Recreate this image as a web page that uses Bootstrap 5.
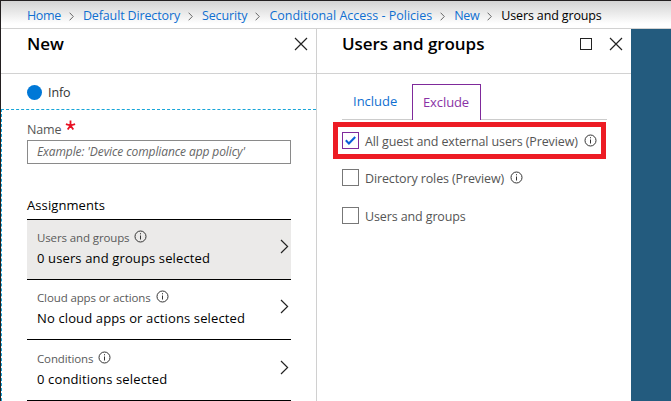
<!DOCTYPE html>
<html lang="en">
<head>
<meta charset="utf-8">
<meta name="viewport" content="width=device-width, initial-scale=1">
<title>Users and groups</title>
<link href="https://cdn.jsdelivr.net/npm/bootstrap@5.3.0/dist/css/bootstrap.min.css" rel="stylesheet">
<style>
body{font-family:"Open Sans","Noto Sans",sans-serif;font-size:13px;line-height:18px;color:#000;background:#fff}
a{text-decoration:none;color:#0f6fd1}
svg{display:block;flex:none;fill:none}
.portal{height:401px;border-top:1px solid #231f20;border-left:1px solid #231f20}
.crumbs{height:27px;font-size:12.5px;padding:2px 0 0 26px;background:linear-gradient(#d3d3d3,#fff 85%)}
.crumbs svg{width:5px;height:9px;margin:1px 9px 0 8px;stroke:#666}
.t1{letter-spacing:-.35px}.t2{letter-spacing:-.14px}.t3{letter-spacing:-.14px}
.blades{background:#235b7e;border-top:1px solid #d2d2d2;height:373px}
.blade-new{width:316px;border-right:1px solid #d0d0d0}
.blade-users{width:314px}
.blade-head{height:45px;border-bottom:1px solid #d2d2d2}
.blade-head h1{font-size:17px;line-height:24px;font-weight:600;margin:3px 0 0;letter-spacing:-.05px}
.blade-new .blade-head{padding-left:26px;padding-right:8px}
.blade-users .blade-head{padding-left:25px;padding-right:8px}
.tools{height:30px;gap:17px}
.info-row{height:35px;padding:1px 0 0 26px;gap:6px;color:#333;font-size:12.5px;letter-spacing:-.1px}
.info-row .txt{padding-top:2px}
.dot{width:15px;height:15px;background:#0078d7;border-radius:50%}
.form-area{height:292px;border-top:1px dashed #18a5d8;border-left:1px dashed #18a5d8;padding:0 25px}
.name-label{height:30px;padding-top:11px;font-size:12.5px;letter-spacing:-.16px;color:#555}
.name-label svg{margin-top:-1px}
.name-field{height:24px;border:1px solid #8a8a8a;border-radius:0;padding:0 9px 2px;font-size:12px;font-style:italic;letter-spacing:-.1px;color:#333;box-shadow:none!important}
.name-field::placeholder{color:#666;opacity:1}
.section-title{font-size:13px;line-height:18px;font-weight:400;margin:32px 0 0;height:23px;letter-spacing:.09px}
.pick{height:60px;border-top:1px solid #000;padding:8px 2px 0 10px}
.pick.on{background:#ebeae9}
.pick.last-pick{height:62px;border-bottom:1px solid #000;padding-top:9px}
.pick-label{font-size:11.5px;line-height:20px;height:20px;color:#5a5a5a;letter-spacing:-.12px;gap:5px}
.pick-label svg{margin-top:-3px}
.pick-value{line-height:21px;letter-spacing:.13px}
.chev{margin-top:11px}
.tabs{margin:10px 24px 0 25px;height:36px}
.tab-line{border-bottom:1px solid #ccc}
.tab-a{width:70px;padding:8px 0 0 11px}
.tab-b{width:69px;border:1px solid #7f2a9b;border-bottom:0;color:#8a32a5;padding:8px 0 0 10px;letter-spacing:-.1px}
.hilite{width:273px;height:37px;border:5px solid #ed1c24;margin:2px 0 0 16px;padding:0 0 0 4px}
.opt{gap:6px;font-size:12.5px;color:#555}
.box{width:17px;height:17px;border:1px solid #777;background:#fff}
.box.on{border-color:#7f2a9b}
.opt-plain{height:37px;margin-left:25px}
.opt-last{margin-top:1px}
.opt .lbl{letter-spacing:-.12px;padding-top:2px}
</style>
</head>
<body>
<svg width="0" height="0" class="position-absolute" aria-hidden="true">
<symbol id="info" viewBox="0 0 13 13"><circle cx="6.5" cy="6.5" r="5.5" stroke="#333"/><path d="M6.5 5.5v4M6.5 3.2v1.1" stroke="#333"/></symbol>
<symbol id="close" viewBox="0 0 14 14"><path d="M1 1l12 12M13 1L1 13" stroke="#222" stroke-width="1.2"/></symbol>
<symbol id="sep" viewBox="0 0 5 9"><path d="M.6.7l3.7 3.8L.6 8.3"/></symbol>
<symbol id="next" viewBox="0 0 9 15"><path d="M1 1l6.6 6.5L1 14" stroke="#222" stroke-width="1.2"/></symbol>
</svg>
<div class="portal overflow-hidden">
<nav class="crumbs d-flex align-items-center text-nowrap" aria-label="breadcrumb">
<a href="#" class="t1">Home</a><svg><use href="#sep"/></svg>
<a href="#" class="t2">Default Directory</a><svg><use href="#sep"/></svg>
<a href="#" class="t2">Security</a><svg><use href="#sep"/></svg>
<a href="#">Conditional Access - Policies</a><svg><use href="#sep"/></svg>
<a href="#" class="t1">New</a><svg><use href="#sep"/></svg>
<span class="t3">Users and groups</span>
</nav>
<div class="blades d-flex">
<section class="blade-new bg-white flex-shrink-0">
<header class="blade-head d-flex justify-content-between align-items-start">
<h1>New</h1>
<div class="tools d-flex align-items-center"><svg width="14" height="14"><use href="#close"/></svg></div>
</header>
<div class="info-row d-flex align-items-center"><span class="dot"></span><span class="txt">Info</span></div>
<div class="form-area">
<label class="name-label d-flex" for="policy">Name<svg class="ms-1" width="11" height="11" viewBox="0 0 11 11"><path d="M5.5 5.5V.6M5.5 5.5L.9 4.1M5.5 5.5l4.6-1.4M5.5 5.5L2.7 9.6M5.5 5.5l2.8 4.1" stroke="#e81123" stroke-width="1.8"/></svg></label>
<input id="policy" class="name-field form-control" type="text" placeholder="Example: 'Device compliance app policy'">
<h2 class="section-title">Assignments</h2>
<div class="pick on d-flex justify-content-between">
<div><div class="pick-label d-flex align-items-center">Users and groups<svg width="13" height="13"><use href="#info"/></svg></div><div class="pick-value">0 users and groups selected</div></div>
<svg class="chev" width="9" height="15"><use href="#next"/></svg>
</div>
<div class="pick d-flex justify-content-between">
<div><div class="pick-label d-flex align-items-center">Cloud apps or actions<svg width="13" height="13"><use href="#info"/></svg></div><div class="pick-value">No cloud apps or actions selected</div></div>
<svg class="chev" width="9" height="15"><use href="#next"/></svg>
</div>
<div class="pick last-pick d-flex justify-content-between">
<div><div class="pick-label d-flex align-items-center">Conditions<svg width="13" height="13"><use href="#info"/></svg></div><div class="pick-value">0 conditions selected</div></div>
<svg class="chev" width="9" height="15"><use href="#next"/></svg>
</div>
</div>
</section>
<section class="blade-users bg-white flex-shrink-0">
<header class="blade-head d-flex justify-content-between align-items-start">
<h1>Users and groups</h1>
<div class="tools d-flex align-items-center">
<svg width="12" height="12"><rect x=".5" y=".5" width="11" height="11" stroke="#222"/></svg>
<svg width="14" height="14"><use href="#close"/></svg>
</div>
</header>
<div class="tabs d-flex">
<a href="#" class="tab-a tab-line">Include</a>
<div class="tab-b">Exclude</div>
<div class="flex-grow-1 tab-line"></div>
</div>
<div class="hilite opt d-flex align-items-center">
<span class="box on d-flex align-items-center justify-content-center"><svg width="11" height="9" viewBox="0 0 11 9"><path d="M.8 4.3l3.1 3.2L10.2 1" stroke="#0b5fd8" stroke-width="2"/></svg></span>
<span class="lbl">All guest and external users (Preview)</span><svg width="13" height="13"><use href="#info"/></svg>
</div>
<div class="opt opt-plain d-flex align-items-center"><span class="box"></span><span class="lbl">Directory roles (Preview)</span><svg width="13" height="13"><use href="#info"/></svg></div>
<div class="opt opt-plain opt-last d-flex align-items-center"><span class="box"></span><span class="lbl">Users and groups</span></div>
</section>
</div>
</div>
<script src="https://cdn.jsdelivr.net/npm/bootstrap@5.3.0/dist/js/bootstrap.bundle.min.js"></script>
</body>
</html>
